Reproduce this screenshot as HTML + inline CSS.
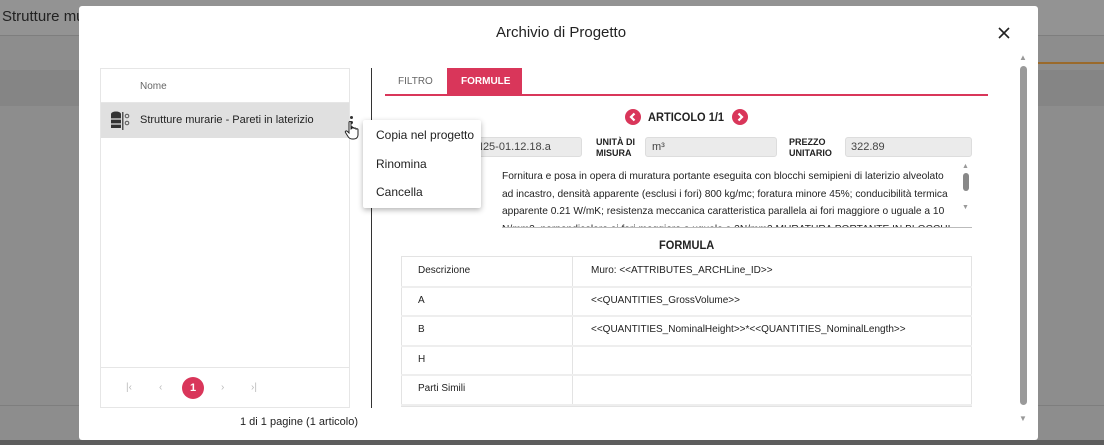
<!DOCTYPE html>
<html><head><meta charset="utf-8"><style>
*{box-sizing:border-box;margin:0;padding:0}
body{width:1104px;height:445px;overflow:hidden;background:#8d8d8d;font-family:"Liberation Sans",Arial,sans-serif;position:relative;color:#222}
.abs{position:absolute}
.t{font-size:12px;white-space:nowrap}
</style></head><body>
<div class="abs" style="left:0;top:0;width:1104px;height:36px;background:#939393"></div>
<div class="abs t" style="left:2px;top:8px;font-size:15px;color:#222">Strutture murarie</div>
<div class="abs" style="left:0;top:35px;width:1104px;height:1px;background:#7e7e7e"></div>
<div class="abs" style="left:0;top:70px;width:1104px;height:36px;background:#858585"></div>
<div class="abs" style="left:1038px;top:62px;width:66px;height:2px;background:#9a6a2c"></div>
<div class="abs" style="left:0;top:405px;width:1104px;height:1px;background:#7e7e7e"></div>
<div class="abs" style="left:0;top:440px;width:1104px;height:5px;background:#5d5d5d"></div>

<div class="abs" style="left:79px;top:6px;width:959px;height:434px;background:#fff;border-radius:3px"></div>
<div class="abs" style="left:496px;top:24px;font-size:15px;color:#222">Archivio di Progetto</div>
<svg class="abs" style="left:998px;top:27px" width="12" height="12" viewBox="0 0 12 12"><path d="M1 1L11 11M11 1L1 11" stroke="#222" stroke-width="1.6"/></svg>

<!-- left panel -->
<div class="abs" style="left:100px;top:68px;width:250px;height:340px;border:1px solid #e6e6e6"></div>
<div class="abs t" style="left:140px;top:81px;font-size:10px;color:#666">Nome</div>
<div class="abs" style="left:101px;top:102px;width:248px;height:1px;background:#e6e6e6"></div>
<div class="abs" style="left:101px;top:103px;width:248px;height:35px;background:#e0e0e0"></div>
<svg class="abs" style="left:110px;top:110px" width="22" height="22" viewBox="0 0 22 22">
<ellipse cx="6" cy="4" rx="5" ry="2.5" fill="#333"/><rect x="1" y="4" width="10" height="14" fill="#333"/>
<path d="M1 9h10M1 14h10" stroke="#e0e0e0" stroke-width="1.2"/>
<rect x="12" y="2" width="1.5" height="18" fill="#555"/>
<circle cx="17" cy="6" r="1.8" fill="none" stroke="#555"/><circle cx="17" cy="13" r="1.8" fill="none" stroke="#555"/>
</svg>
<div class="abs t" style="left:140px;top:114px;font-size:11px;color:#222">Strutture murarie - Pareti in laterizio</div>
<div class="abs" style="left:350px;top:116px;width:3px;height:3px;background:#333;border-radius:2px"></div>
<div class="abs" style="left:350px;top:121px;width:3px;height:3px;background:#333;border-radius:2px"></div>
<div class="abs" style="left:350px;top:126px;width:3px;height:3px;background:#333;border-radius:2px"></div>
<div class="abs" style="left:101px;top:367px;width:248px;height:1px;background:#e6e6e6"></div>
<div class="abs t" style="left:126px;top:382px;color:#bbb;font-size:10px">|‹</div>
<div class="abs t" style="left:159px;top:382px;color:#bbb;font-size:10px">‹</div>
<div class="abs" style="left:182px;top:377px;width:22px;height:22px;border-radius:11px;background:#d9365a;color:#fff;font-size:11px;font-weight:bold;text-align:center;line-height:22px">1</div>
<div class="abs t" style="left:221px;top:382px;color:#bbb;font-size:10px">›</div>
<div class="abs t" style="left:251px;top:382px;color:#bbb;font-size:10px">›|</div>
<div class="abs t" style="left:240px;top:416px;font-size:11px;color:#222">1 di 1 pagine (1 articolo)</div>
<div class="abs" style="left:371px;top:68px;width:1px;height:340px;background:#333"></div>

<!-- right -->
<div class="abs t" style="left:398px;top:76px;font-size:10px;color:#666">FILTRO</div>
<div class="abs" style="left:447px;top:68px;width:75px;height:27px;background:#d9365a"></div>
<div class="abs t" style="left:461px;top:76px;font-size:10px;color:#fff;font-weight:bold">FORMULE</div>
<div class="abs" style="left:385px;top:94px;width:603px;height:2px;background:#d9365a"></div>
<svg class="abs" style="left:625px;top:109px" width="16" height="16" viewBox="0 0 16 16"><circle cx="8" cy="8" r="8" fill="#d9365a"/><path d="M9.5 4.5L6 8l3.5 3.5" stroke="#fff" stroke-width="2.2" fill="none"/></svg>
<div class="abs t" style="left:648px;top:110px;font-size:12px;font-weight:bold;transform:scaleX(.92);transform-origin:left">ARTICOLO 1/1</div>
<svg class="abs" style="left:732px;top:109px" width="16" height="16" viewBox="0 0 16 16"><circle cx="8" cy="8" r="8" fill="#d9365a"/><path d="M6.5 4.5L10 8l-3.5 3.5" stroke="#fff" stroke-width="2.2" fill="none"/></svg>

<div class="abs" style="left:470px;top:137px;width:112px;height:20px;background:#ebebeb;border:1px solid #ddd;border-radius:3px"></div>
<div class="abs t" style="left:475px;top:141px;font-size:11px;color:#444">N25-01.12.18.a</div>
<div class="abs" style="left:596px;top:137px;font-size:9px;font-weight:bold;line-height:11px">UNITÀ DI<br>MISURA</div>
<div class="abs" style="left:645px;top:137px;width:132px;height:20px;background:#ebebeb;border:1px solid #ddd;border-radius:3px"></div>
<div class="abs t" style="left:652px;top:141px;font-size:11px;color:#444">m³</div>
<div class="abs" style="left:789px;top:137px;font-size:9px;font-weight:bold;line-height:11px">PREZZO<br>UNITARIO</div>
<div class="abs" style="left:845px;top:137px;width:127px;height:20px;background:#ebebeb;border:1px solid #ddd;border-radius:3px"></div>
<div class="abs t" style="left:851px;top:141px;font-size:11px;color:#444">322.89</div>

<div class="abs" style="left:502px;top:168px;width:456px;height:59px;overflow:hidden;font-size:10.2px;line-height:17.5px;color:#222;white-space:nowrap">Fornitura e posa in opera di muratura portante eseguita con blocchi semipieni di laterizio alveolato<br>ad incastro, densità apparente (esclusi i fori) 800 kg/mc; foratura minore 45%; conducibilità termica<br>apparente 0.21 W/mK; resistenza meccanica caratteristica parallela ai fori maggiore o uguale a 10<br>N/mm2, perpendicolare ai fori maggiore o uguale a 2N/mm2 MURATURA PORTANTE IN BLOCCHI</div>
<div class="abs" style="left:962px;top:163px;font-size:7px;color:#999">▲</div>
<div class="abs" style="left:963px;top:173px;width:6px;height:18px;background:#888;border-radius:3px"></div>
<div class="abs" style="left:962px;top:204px;font-size:7px;color:#999">▼</div>
<div class="abs" style="left:502px;top:227px;width:470px;height:1px;background:#bbb"></div>

<div class="abs t" style="left:659px;top:238px;font-size:12px;font-weight:bold;transform:scaleX(.92);transform-origin:left">FORMULA</div>
<div class="abs" style="left:401px;top:256px;width:571px;height:151px;border:1px solid #e3e3e3"></div>
<div class="abs" style="left:572px;top:256px;width:1px;height:150px;background:#e3e3e3"></div>
<div class="abs" style="left:401px;top:286px;width:571px;height:2px;background:#eee"></div>
<div class="abs" style="left:401px;top:315px;width:571px;height:2px;background:#eee"></div>
<div class="abs" style="left:401px;top:345px;width:571px;height:2px;background:#eee"></div>
<div class="abs" style="left:401px;top:374px;width:571px;height:2px;background:#eee"></div>
<div class="abs" style="left:401px;top:404px;width:571px;height:2px;background:#eee"></div>
<div class="abs t" style="left:418px;top:265px;font-size:10px">Descrizione</div>
<div class="abs t" style="left:418px;top:295px;font-size:10px">A</div>
<div class="abs t" style="left:418px;top:324px;font-size:10px">B</div>
<div class="abs t" style="left:418px;top:354px;font-size:10px">H</div>
<div class="abs t" style="left:418px;top:383px;font-size:10px">Parti Simili</div>
<div class="abs t" style="left:591px;top:265px;font-size:10px">Muro: &lt;&lt;ATTRIBUTES_ARCHLine_ID&gt;&gt;</div>
<div class="abs t" style="left:591px;top:295px;font-size:10px">&lt;&lt;QUANTITIES_GrossVolume&gt;&gt;</div>
<div class="abs t" style="left:591px;top:324px;font-size:10px">&lt;&lt;QUANTITIES_NominalHeight&gt;&gt;*&lt;&lt;QUANTITIES_NominalLength&gt;&gt;</div>

<div class="abs" style="left:1020px;top:66px;width:7px;height:339px;background:#9a9a9a;border-radius:4px"></div>
<div class="abs" style="left:1019px;top:53px;font-size:8px;color:#999">▲</div>
<div class="abs" style="left:1019px;top:414px;font-size:8px;color:#999">▼</div>

<!-- menu -->
<div class="abs" style="left:363px;top:120px;width:118px;height:88px;background:#fff;box-shadow:0 2px 6px rgba(0,0,0,.3);border-radius:2px"></div>
<div class="abs t" style="left:376px;top:128px;font-size:12px">Copia nel progetto</div>
<div class="abs t" style="left:376px;top:157px;font-size:12px">Rinomina</div>
<div class="abs t" style="left:376px;top:185px;font-size:12px">Cancella</div>
<svg class="abs" style="left:344px;top:120px" width="16" height="20" viewBox="0 0 16 20"><path d="M5 2.5c0-1.4 2-1.4 2 0V9l1-.5c0-1.3 2-1.3 2 0v.5c0-1.3 2-1.3 2 0v.7c0-1.3 2-1.3 2 0V15c0 2-1.5 4-4 4H8c-2 0-3-1-4-2.5L1.5 12.5c-.7-1.2.8-2.2 1.7-1.2L5 13z" fill="#fff" stroke="#222" stroke-width="1"/></svg>
</body></html>
